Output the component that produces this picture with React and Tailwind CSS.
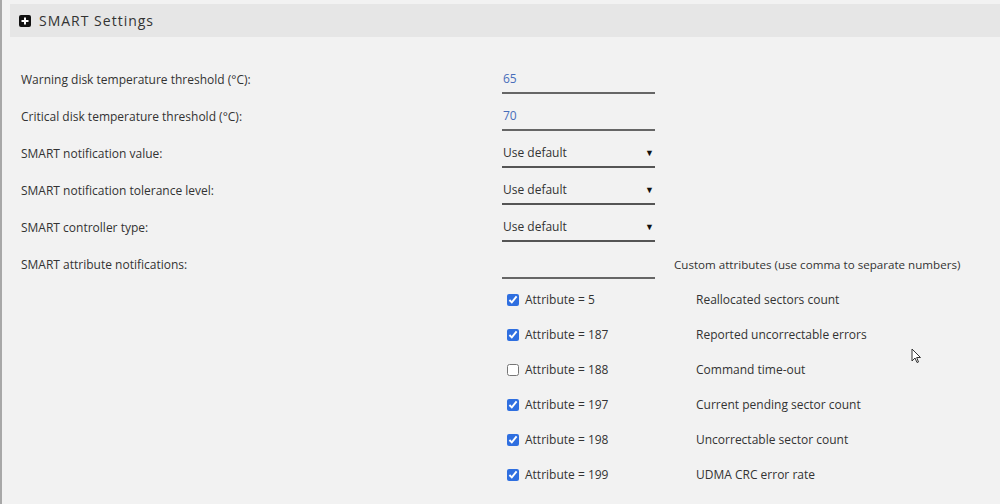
import React from "react";

const font = { fontFamily: '"Open Sans", "Noto Sans", sans-serif' };

function Row({ label, children, right }) {
  return (
    <div className="flex h-[37px] items-start">
      <div className="w-[500px] h-[28px] flex items-center pl-[19px] text-[12px] text-[#333]">{label}</div>
      {children}
      {right}
    </div>
  );
}

function NumInput({ value }) {
  return (
    <div className="w-[153px] h-[28px] border-b-2 border-[#666] flex items-center pl-[1px] text-[12px] text-[#486dba]">{value}</div>
  );
}

function Select() {
  return (
    <div className="w-[153px] h-[28px] border-b-2 border-[#555] flex items-center justify-between pl-[1px] pr-[1px] text-[12px] text-[#333]">
      <span>Use default</span>
      <span className="text-[9px] text-[#111]">▼</span>
    </div>
  );
}

const attrs = [
  [true, "5", "Reallocated sectors count"],
  [true, "187", "Reported uncorrectable errors"],
  [false, "188", "Command time-out"],
  [true, "197", "Current pending sector count"],
  [true, "198", "Uncorrectable sector count"],
  [true, "199", "UDMA CRC error rate"],
];

export default function App() {
  return (
    <div className="relative w-full h-[504px] bg-[#f2f2f2] border-l-2 border-[#a8a8a8] overflow-hidden" style={font}>
      <div className="ml-[8px] mt-[4px] h-[33px] bg-[#e6e6e6] flex items-center pl-[9px]">
        <svg width="12" height="12" viewBox="0 0 12 12" className="mr-[8px]">
          <rect x="0" y="0" width="12" height="12" rx="2" fill="#111" />
          <rect x="5" y="2.5" width="2" height="7" fill="#fff" />
          <rect x="2.5" y="5" width="7" height="2" fill="#fff" />
        </svg>
        <span className="text-[14px] tracking-[1px] text-[#333]">SMART Settings</span>
      </div>
      <div className="mt-[29px]">
        <Row label="Warning disk temperature threshold (°C):"><NumInput value="65" /></Row>
        <Row label="Critical disk temperature threshold (°C):"><NumInput value="70" /></Row>
        <Row label="SMART notification value:"><Select /></Row>
        <Row label="SMART notification tolerance level:"><Select /></Row>
        <Row label="SMART controller type:"><Select /></Row>
        <Row
          label="SMART attribute notifications:"
          right={<div className="h-[28px] flex items-center ml-[19px] text-[11.6px] text-[#333]">Custom attributes (use comma to separate numbers)</div>}
        >
          <NumInput value="" />
        </Row>
      </div>
      <div className="mt-[-6px] ml-[500px]">
        {attrs.map(([checked, n, desc]) => (
          <div key={n} className="flex items-center h-[35px] text-[12px] text-[#333]">
            <input type="checkbox" defaultChecked={checked} className="w-[12px] h-[12px] ml-[5px] mr-[6px] accent-[#2f6fe0]" />
            <span className="w-[171px]">Attribute = {n}</span>
            <span>{desc}</span>
          </div>
        ))}
      </div>
      <svg className="absolute left-[909px] top-[348px]" width="11" height="16" viewBox="0 0 11 16">
        <path d="M1 1 L1 13 L4 10 L6 14.5 L7.5 14 L5.7 9.5 L9.5 9.5 Z" fill="#fff" stroke="#333" strokeWidth="1" strokeLinejoin="round" />
      </svg>
    </div>
  );
}
